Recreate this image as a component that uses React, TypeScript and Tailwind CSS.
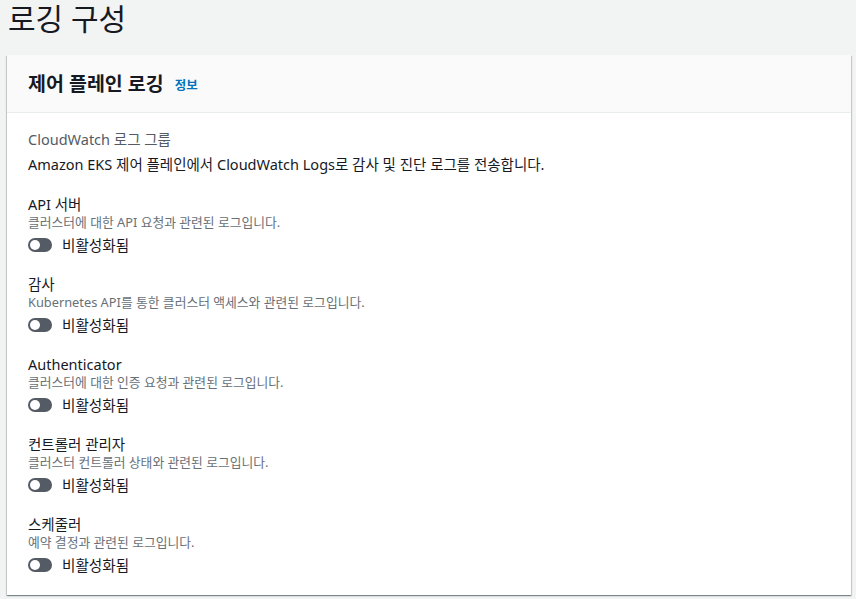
const logTypes = [
  { name: "API 서버", desc: "클러스터에 대한 API 요청과 관련된 로그입니다." },
  { name: "감사", desc: "Kubernetes API를 통한 클러스터 액세스와 관련된 로그입니다." },
  { name: "Authenticator", desc: "클러스터에 대한 인증 요청과 관련된 로그입니다." },
  { name: "컨트롤러 관리자", desc: "클러스터 컨트롤러 상태와 관련된 로그입니다." },
  { name: "스케줄러", desc: "예약 결정과 관련된 로그입니다." },
];

function Toggle() {
  return (
    <div className="flex items-center h-5">
      <span className="relative inline-block w-6 h-[14px] rounded-full bg-[#545b64]">
        <span className="absolute left-[2px] top-[2px] w-[10px] h-[10px] rounded-full bg-white" />
      </span>
      <span className="ml-[10px] text-[14.6px] leading-5 text-[#16191f]">비활성화됨</span>
    </div>
  );
}

export default function App() {
  return (
    <div
      className="min-h-[599px] bg-[#f2f3f3] pr-[5px] pl-[7px] pt-px"
      style={{ fontFamily: '"Noto Sans", "Noto Sans CJK KR", sans-serif' }}
    >
      <h1 className="pl-px text-[30px] leading-[36px] text-[#16191f] font-normal">로깅 구성</h1>
      <div className="mt-[18px] w-[844px] bg-white shadow-[0_1px_1px_0_rgba(0,28,36,0.3),1px_1px_1px_0_rgba(0,28,36,0.15),-1px_1px_1px_0_rgba(0,28,36,0.15)]">
        <div className="h-[58px] bg-[#fafafa] border-b border-[#eaeded] flex items-center px-[21px]">
          <h2 className="text-[19.5px] font-bold text-[#16191f] leading-6">제어 플레인 로깅</h2>
          <a className="ml-[11px] mt-[4px] text-[12.5px] font-bold text-[#0073bb] leading-4">정보</a>
        </div>
        <div className="px-[21px] pt-[16px] pb-[20px] text-[#16191f]">
          <div className="text-[14.5px] leading-5 text-[#545b64]">CloudWatch 로그 그룹</div>
          <div className="mt-[5px] text-[14.5px] leading-5">
            Amazon EKS 제어 플레인에서 CloudWatch Logs로 감사 및 진단 로그를 전송합니다.
          </div>
          <div className="flex flex-col gap-[19px] mt-5">
            {logTypes.map((t) => (
              <div key={t.name} className="flex flex-col">
                <div className="text-[14.5px] leading-5">{t.name}</div>
                <div className="text-[12.8px] leading-4 text-[#687078]">{t.desc}</div>
                <div className="mt-[5px]">
                  <Toggle />
                </div>
              </div>
            ))}
          </div>
        </div>
      </div>
    </div>
  );
}
